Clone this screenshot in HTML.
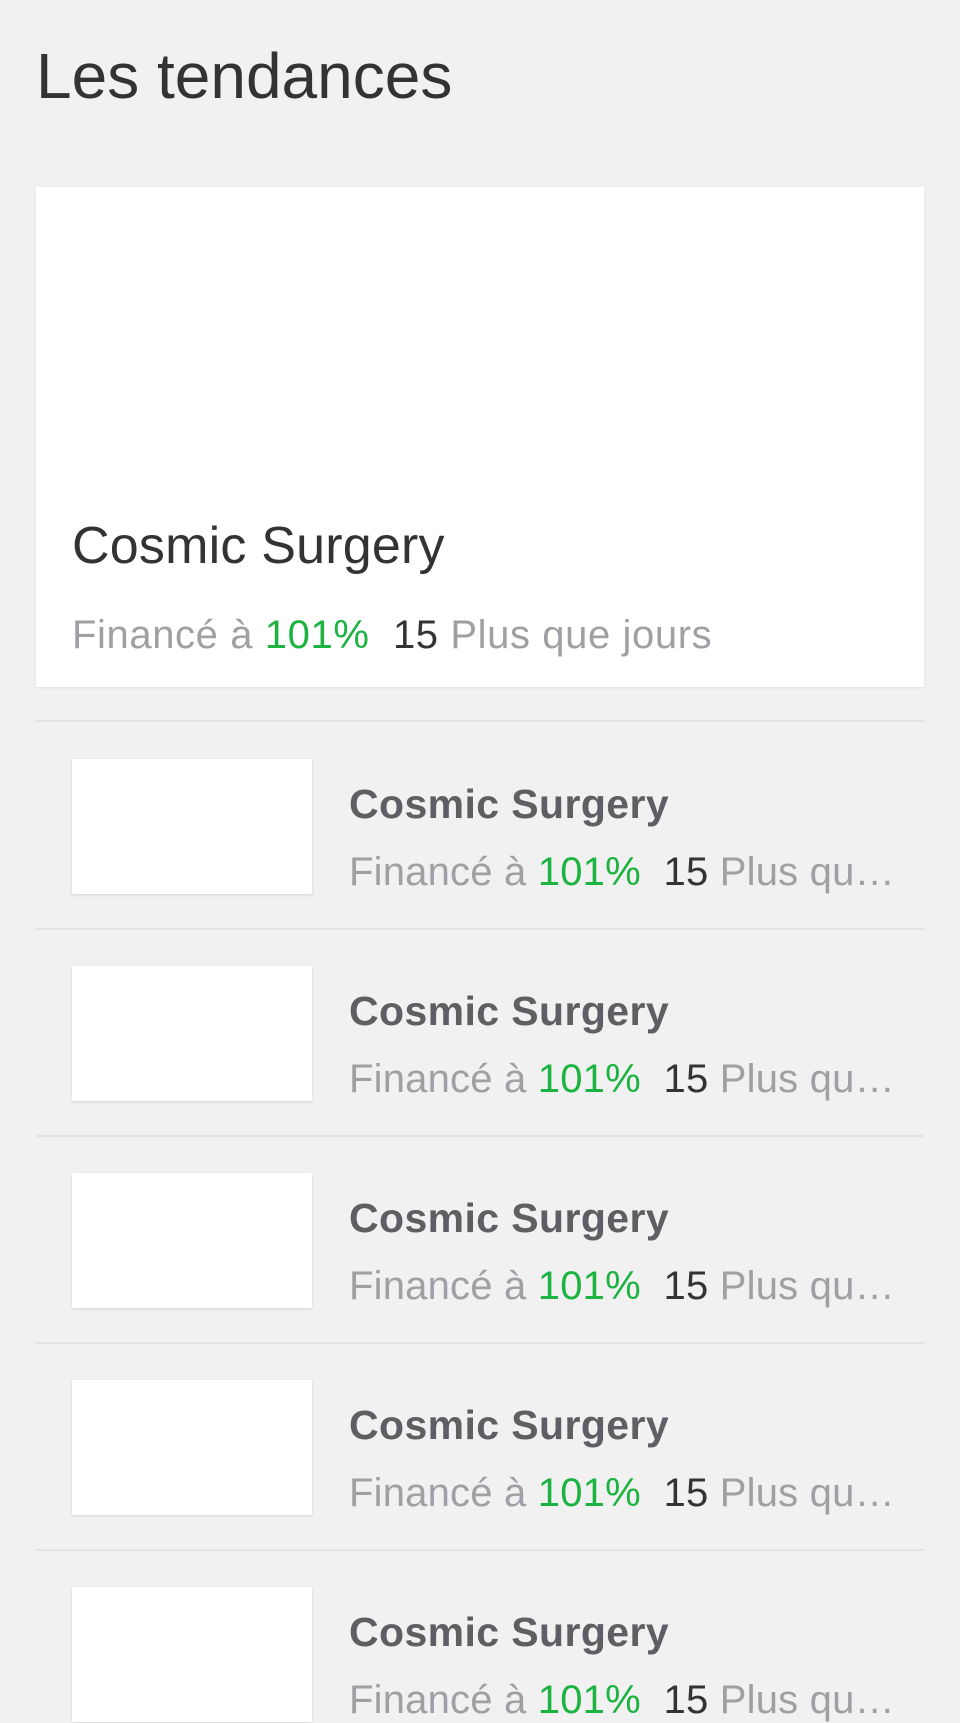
<!DOCTYPE html>
<html><head><meta charset="utf-8"><style>
*{margin:0;padding:0;box-sizing:border-box}
body{width:960px;height:1704px;background:#f1f1f2;font-family:"Liberation Sans",sans-serif;overflow:hidden;position:relative}
.h{position:absolute;left:36px;top:39px;font-size:64px;color:#333;font-weight:normal;letter-spacing:0px}
.card{position:absolute;left:36px;top:187px;width:888px;height:500px;background:#fff;box-shadow:0 1px 3px rgba(0,0,0,.08)}
.card .t{position:absolute;left:36px;top:329px;font-size:52px;color:#333;letter-spacing:0.2px}
.card .s{position:absolute;left:36px;top:426px;font-size:40px;color:#a0a0a4;white-space:nowrap;letter-spacing:0.6px}
.g{color:#1cb341}.d{color:#333}
.sep{position:absolute;left:36px;width:888px;height:2px;background:#e3e3e5}
.th{position:absolute;left:72px;width:240px;height:135px;background:#fff;box-shadow:0 1px 3px rgba(0,0,0,.12)}
.rt{position:absolute;left:349px;font-size:41px;font-weight:bold;color:#5f5e63;letter-spacing:0.4px}
.rs{position:absolute;left:349px;font-size:40px;color:#a0a0a4;white-space:nowrap;width:560px;overflow:hidden;letter-spacing:0.2px}
</style></head><body>
<div class="h">Les tendances</div>
<div class="card"><div class="t">Cosmic Surgery</div><div class="s">Financé à <span class="g">101%</span>&nbsp; <span class="d">15</span> Plus que jours</div></div>

<div class="sep" style="top:720px"></div>
<div class="th" style="top:759px"></div>
<div class="rt" style="top:781px">Cosmic Surgery</div>
<div class="rs" style="top:850px">Financé à <span class="g">101%</span>&nbsp; <span class="d">15</span> Plus qu…</div>

<div class="sep" style="top:928px"></div>
<div class="th" style="top:966px"></div>
<div class="rt" style="top:988px">Cosmic Surgery</div>
<div class="rs" style="top:1057px">Financé à <span class="g">101%</span>&nbsp; <span class="d">15</span> Plus qu…</div>

<div class="sep" style="top:1135px"></div>
<div class="th" style="top:1173px"></div>
<div class="rt" style="top:1195px">Cosmic Surgery</div>
<div class="rs" style="top:1264px">Financé à <span class="g">101%</span>&nbsp; <span class="d">15</span> Plus qu…</div>

<div class="sep" style="top:1342px"></div>
<div class="th" style="top:1380px"></div>
<div class="rt" style="top:1402px">Cosmic Surgery</div>
<div class="rs" style="top:1471px">Financé à <span class="g">101%</span>&nbsp; <span class="d">15</span> Plus qu…</div>

<div class="sep" style="top:1549px"></div>
<div class="th" style="top:1587px"></div>
<div class="rt" style="top:1609px">Cosmic Surgery</div>
<div class="rs" style="top:1678px">Financé à <span class="g">101%</span>&nbsp; <span class="d">15</span> Plus qu…</div>
</body></html>
